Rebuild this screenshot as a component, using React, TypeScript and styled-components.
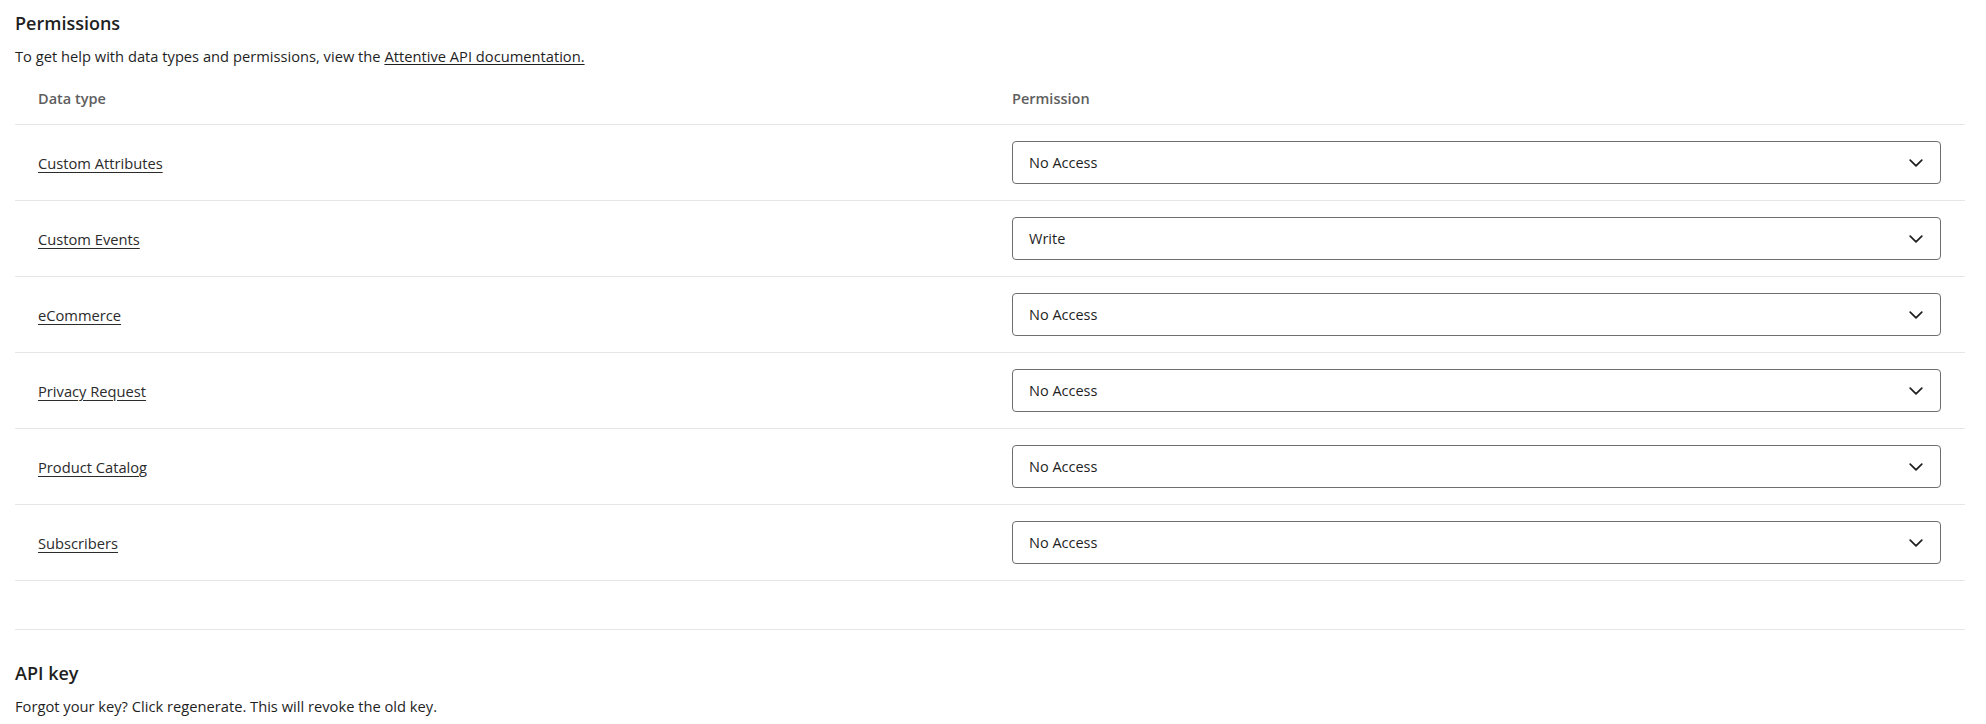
import { createGlobalStyle, styled } from "styled-components";

const GlobalStyle = createGlobalStyle`
  body {
    margin: 0;
    background: #ffffff;
    font-family: "Open Sans", "Noto Sans", "Liberation Sans", sans-serif;
    color: #1f1f1f;
  }
`;

type PermissionRow = {
  dataType: string;
  permission: string;
};

const rows: PermissionRow[] = [
  { dataType: "Custom Attributes", permission: "No Access" },
  { dataType: "Custom Events", permission: "Write" },
  { dataType: "eCommerce", permission: "No Access" },
  { dataType: "Privacy Request", permission: "No Access" },
  { dataType: "Product Catalog", permission: "No Access" },
  { dataType: "Subscribers", permission: "No Access" },
];

const Chevron = () => (
  <svg width="14" height="8" viewBox="0 0 14 8" fill="none">
    <path
      d="M1.2 1.2L7 6.8L12.8 1.2"
      stroke="#1f1f1f"
      strokeWidth="1.7"
      strokeLinecap="round"
      strokeLinejoin="round"
    />
  </svg>
);

const App = () => {
  return (
    <>
      <GlobalStyle />
      <Page>
        <SectionTitle>Permissions</SectionTitle>
        <Description>
          To get help with data types and permissions, view the{" "}
          <InlineLink href="#">Attentive API documentation.</InlineLink>
        </Description>

        <Table>
          <HeaderRow>
            <HeaderCell>Data type</HeaderCell>
            <HeaderCell>Permission</HeaderCell>
          </HeaderRow>
          {rows.map((row) => (
            <Row key={row.dataType}>
              <TypeCell>
                <TypeLink href="#">{row.dataType}</TypeLink>
              </TypeCell>
              <SelectCell>
                <SelectBox type="button">
                  <span>{row.permission}</span>
                  <Chevron />
                </SelectBox>
              </SelectCell>
            </Row>
          ))}
        </Table>

        <Divider />

        <SectionTitle $spaced>API key</SectionTitle>
        <Description>
          Forgot your key? Click regenerate. This will revoke the old key.
        </Description>
      </Page>
    </>
  );
};

export default App;

const Page = styled.div`
  padding: 11px 21px 0 15px;
`;

const SectionTitle = styled.h2<{ $spaced?: boolean }>`
  margin: ${({ $spaced }) => ($spaced ? "31px" : "0")} 0 0;
  font-size: 18px;
  line-height: 24px;
  font-weight: 600;
  color: #1f1f1f;
`;

const Description = styled.p`
  margin: 11px 0 0;
  font-size: 14.7px;
  line-height: 20px;
  color: #1f1f1f;
`;

const InlineLink = styled.a`
  color: #1f1f1f;
  text-decoration: underline;
  text-underline-offset: 2px;
`;

const Table = styled.div`
  margin-top: 6px;
  display: flex;
  flex-direction: column;
`;

const HeaderRow = styled.div`
  display: grid;
  grid-template-columns: 997px 1fr;
  align-items: center;
  height: 53px;
  box-sizing: border-box;
  border-bottom: 1px solid #e6e6e6;
`;

const HeaderCell = styled.div`
  font-size: 14.5px;
  font-weight: 600;
  color: #5e5e5e;

  &:first-child {
    padding-left: 23px;
  }
`;

const Row = styled.div`
  display: grid;
  grid-template-columns: 997px 1fr;
  align-items: center;
  height: 76px;
  box-sizing: border-box;
  border-bottom: 1px solid #e6e6e6;
`;

const TypeCell = styled.div`
  padding-left: 23px;
`;

const TypeLink = styled.a`
  font-size: 14.7px;
  color: #2b2b2b;
  text-decoration: underline;
  text-underline-offset: 3px;
`;

const SelectCell = styled.div`
  padding-right: 24px;
`;

const SelectBox = styled.button`
  width: 100%;
  height: 43px;
  display: flex;
  align-items: center;
  justify-content: space-between;
  padding: 0 17px 0 16px;
  box-sizing: border-box;
  background: #ffffff;
  border: 1px solid #6f6f6f;
  border-radius: 4px;
  font-family: inherit;
  font-size: 14.5px;
  color: #1f1f1f;
  cursor: pointer;
  text-align: left;
`;

const Divider = styled.hr`
  margin: 48px 0 0;
  border: none;
  border-top: 1px solid #e6e6e6;
`;
